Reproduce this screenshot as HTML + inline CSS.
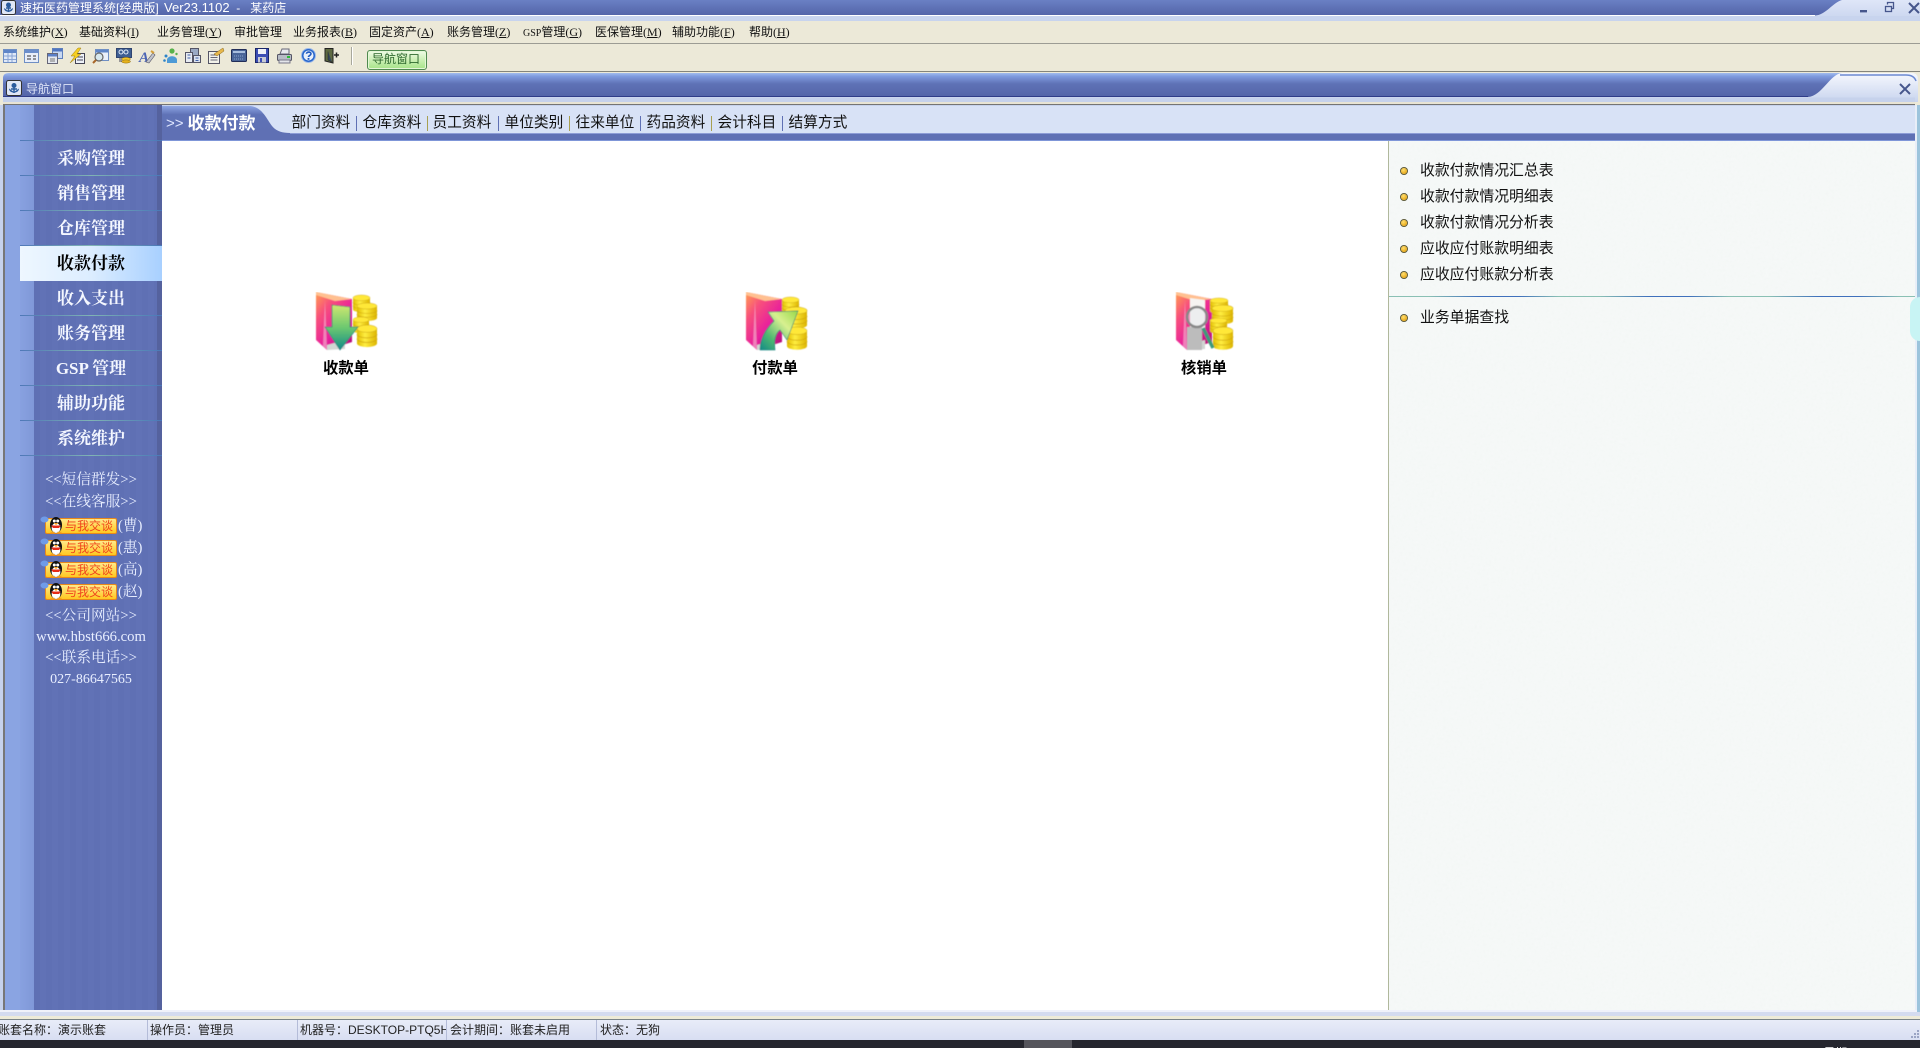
<!DOCTYPE html>
<html lang="zh-CN"><head><meta charset="utf-8"><title>速拓医药管理系统</title>
<style>
html,body{margin:0;padding:0;width:1920px;height:1048px;overflow:hidden;background:#ece9d8}
body{position:relative;font-family:"Liberation Sans","Noto Sans CJK SC",sans-serif;font-size:12px;color:#000}
div,span,svg{position:absolute;display:block}
.t{white-space:nowrap;line-height:18px}
.m{top:23px;font-size:12px;color:#111;font-family:"Liberation Serif","WenQuanYi Zen Hei","Noto Sans CJK SC",sans-serif}
.s{height:1px;left:20px;width:142px;background:linear-gradient(90deg,#4f78b8,#80b4b4 50%,#4a78b8)}
.n{left:20px;width:142px;text-align:center;font:bold 17px/20px "Liberation Serif","Noto Serif CJK SC",serif;color:#f4f7ff;white-space:nowrap}
.l{left:34px;width:114px;text-align:center;font:14.67px/18px "Liberation Serif","Noto Serif CJK SC",serif;color:#e8eeff;white-space:nowrap}
.tb{top:114px;font:14.70px/18px "Liberation Sans","WenQuanYi Zen Hei","Noto Sans CJK SC",sans-serif;color:#111;white-space:nowrap}
.bar{top:116px;width:1px;height:15px;background:#5f70b4}
.lab{top:359px;width:80px;text-align:center;font:bold 15.300px/20px "Liberation Sans","Noto Sans CJK SC",sans-serif;color:#000}
.r{left:1420px;font:14.85px/18px "Liberation Sans","WenQuanYi Zen Hei","Noto Sans CJK SC",sans-serif;color:#111;white-space:nowrap}
.d{left:1401px;width:6px;height:6px;border-radius:50%;background:radial-gradient(circle at 40% 35%,#ffe070,#e8a818 70%);box-shadow:0 0 0 1px #5d5a38}
.st{top:1021px;font-size:12px;line-height:18px;color:#222;white-space:nowrap}
.sd{top:1020px;width:1px;height:20px;background:#b4bcd8}
.q{font:14.67px/18px 'Liberation Serif','Noto Serif CJK SC',serif;color:#e8eeff}
.qt{left:25px;font-size:12px;line-height:16px;color:#f0441c}
</style></head><body>

<!-- main title bar -->
<div style="left:0;top:0;width:1920px;height:21px;background:linear-gradient(#dfe6f8,#c8d4ee)"></div>
<div style="left:0;top:16px;width:1920px;height:5px;background:#c8d4ee"></div>
<svg style="left:0;top:0" width="1920" height="17"><defs><linearGradient id="tg" x1="0" y1="0" x2="0" y2="1"><stop offset="0" stop-color="#6a80c4"/><stop offset="1" stop-color="#5364a8"/></linearGradient></defs>
<path d="M0 0H1842C1832 3 1826 15 1815 15.500H0Z" fill="url(#tg)"/><path d="M0 15.500H1815" stroke="#fff" stroke-width="1"/></svg>
<svg style="left:1850px;top:0" width="70" height="16" fill="none" stroke="#46568c">
<rect x="10" y="10" width="7" height="2.400" fill="#46568c" stroke="none"/>
<rect x="35.500" y="6.500" width="6" height="5" stroke-width="1.300"/><path d="M37.500 4.500V2.500H43.500V8.500H41.500" stroke-width="1.300"/>
<path d="M59 3L69 13M69 3L59 13" stroke-width="2"/></svg>
<svg style="left:1px;top:0" width="16" height="15"><rect x=".5" y=".5" width="14" height="14" rx="2" fill="#dfe6f5" stroke="#333"/><path d="M3 8C3 13 12 13 12 8L7.500 11Z" fill="#2a5b9c"/><circle cx="7.500" cy="5" r="2.500" fill="#2a5b9c"/><path d="M7.500 5V12M5 8H10" stroke="#2a5b9c" stroke-width="1.500"/></svg>
<div class="t" style="left:20px;top:-1px;color:#fff;font-size:12px">速拓医药管理系统[经典版] <span style="position:static;display:inline;font-size:13px;margin-left:2px">Ver23.1102</span> &nbsp;- &nbsp;&nbsp;某药店</div>

<!-- menu -->
<div style="left:0;top:21px;width:1920px;height:22px;background:#ece9d8"></div>
<div style="left:0;top:43px;width:1920px;height:1px;background:#9c9c94"></div>
<div class="t m" style="left:3px">系统维护(<u>X</u>)</div>
<div class="t m" style="left:79px">基础资料(<u>I</u>)</div>
<div class="t m" style="left:157px">业务管理(<u>Y</u>)</div>
<div class="t m" style="left:234px">审批管理</div>
<div class="t m" style="left:293px">业务报表(<u>B</u>)</div>
<div class="t m" style="left:369px">固定资产(<u>A</u>)</div>
<div class="t m" style="left:447px">账务管理(<u>Z</u>)</div>
<div class="t m" style="left:523px"><span style="position:static;display:inline;font-size:10px">GSP</span>管理(<u>G</u>)</div>
<div class="t m" style="left:595px">医保管理(<u>M</u>)</div>
<div class="t m" style="left:672px">辅助功能(<u>F</u>)</div>
<div class="t m" style="left:749px">帮助(<u>H</u>)</div>

<!-- toolbar -->
<div style="left:0;top:44px;width:1920px;height:27px;background:#ece9d8"></div>
<div style="left:0;top:71px;width:1920px;height:1px;background:#85857c"></div>
<svg style="left:0;top:44px" width="350" height="26" stroke-width="1">
<g transform="translate(3,5)"><rect x=".5" y=".5" width="13" height="13" fill="#dfe9f8" stroke="#6f8fc4"/><rect x="1" y="1" width="12" height="3" fill="#5f86c8"/><path d="M1 7H13M1 10.500H13M5 4V13M9 4V13" stroke="#8aa5d4"/></g>
<g transform="translate(24,5)"><rect x=".5" y=".5" width="14" height="13" fill="#e8eef9" stroke="#6f8fc4"/><rect x="1" y="1" width="13" height="3" fill="#6b8ecb"/><path d="M3 7H7M3 10H7M9 7H12M9 10H12" stroke="#333"/></g>
<g transform="translate(47,4)"><rect x="5.500" y=".5" width="10" height="10" fill="#c7d8f2" stroke="#5e7fbd"/><rect x="6" y="1" width="9" height="2.500" fill="#4f75c1"/><rect x=".5" y="5.500" width="10" height="10" fill="#e4e8ef" stroke="#667"/><rect x="1" y="6" width="9" height="2.500" fill="#5b7fc7"/><path d="M3 11H8M3 13H8" stroke="#777"/></g>
<g transform="translate(69,4)"><rect x="6.500" y="5.500" width="9" height="10" fill="#eef2f9" stroke="#445"/><path d="M8 9H14M8 12H14" stroke="#445"/><path d="M9 0L2 8H6L1 15L12 6H8L12 0Z" fill="#f6cf22" stroke="#9a7a10" stroke-width=".5"/></g>
<g transform="translate(93,4)"><rect x="2.500" y="1.500" width="13" height="11" fill="#eaf0fa" stroke="#6f8fc4"/><rect x="3" y="2" width="12" height="2.500" fill="#5f86c8"/><circle cx="6" cy="9" r="4" fill="#d7e8ee" stroke="#666" stroke-width="1.200"/><path d="M3 12L0 15" stroke="#a8672a" stroke-width="2"/></g>
<g transform="translate(116,4)"><rect x=".5" y=".5" width="15" height="9" fill="#3e5e92" stroke="#2f4470"/><circle cx="5" cy="4" r="2" fill="none" stroke="#dfe8f5"/><circle cx="10" cy="4" r="2" fill="none" stroke="#dfe8f5"/><ellipse cx="10" cy="11" rx="4.500" ry="1.600" fill="#f2c52a" stroke="#8d6c10" stroke-width=".5"/><ellipse cx="10" cy="13.500" rx="4.500" ry="1.600" fill="#e6b21c" stroke="#8d6c10" stroke-width=".5"/><path d="M3 11H6M3 13H6" stroke="#445"/></g>
<g transform="translate(139,4)"><text x="0" y="14" font-family="Liberation Serif" font-size="15" font-weight="bold" font-style="italic" fill="#4a63b4">A</text><path d="M7 14L14 5L16 7L10 15Z" fill="#c0c4cc" stroke="#556" stroke-width=".6"/><path d="M12 3L15 5" stroke="#d4a03a" stroke-width="2"/></g>
<g transform="translate(163,4)"><circle cx="9" cy="3" r="2.600" fill="#57b24b"/><path d="M4 12C4 7 14 7 14 12L14 15H4Z" fill="#4d9ad6"/><circle cx="3" cy="8" r="1.500" fill="#2d84c8"/><circle cx="1.500" cy="12.500" r="1.300" fill="#2d84c8"/><circle cx="13.500" cy="6" r="1.200" fill="#54b04c"/></g>
<g transform="translate(185,4)"><rect x="5.500" y=".5" width="8" height="7" fill="#9aa9c4" stroke="#556"/><rect x=".5" y="4.500" width="7" height="10" fill="#e7ebf2" stroke="#556"/><rect x="8.500" y="7.500" width="7" height="7" fill="#dce3f0" stroke="#556"/><path d="M2.500 7H5.500M2.500 10H5.500M10.500 10H13.500M10.500 12.500H13.500" stroke="#4060a8"/></g>
<g transform="translate(208,4)"><rect x=".5" y="3.500" width="11" height="12" fill="#f2f2ea" stroke="#556"/><path d="M2.500 7H9.500M2.500 9.500H9.500M2.500 12H9.500" stroke="#667"/><path d="M6 6L15 0L16 3L9 8Z" fill="#e7b74b" stroke="#8a6a20" stroke-width=".5"/></g>
<g transform="translate(231,5)"><rect x=".5" y=".5" width="15" height="12" rx="1" fill="#4a6598" stroke="#222e58"/><rect x="2" y="2" width="12" height="2" fill="#a9bedd"/><path d="M3 7H13M3 10H13" stroke="#8aa2cc" stroke-dasharray="1 1"/></g>
<g transform="translate(255,4)"><rect x=".5" y=".5" width="13" height="14" fill="#3c4eb4" stroke="#1a2668"/><rect x="3" y="1" width="8" height="5" fill="#f0f2f8"/><rect x="3" y="9" width="8" height="5.500" fill="#c8cbd4"/><rect x="5" y="10" width="2" height="4" fill="#3c4eb4"/></g>
<g transform="translate(277,4)"><path d="M5 1H12L12 6H3Z" fill="#e8eaee" stroke="#667"/><rect x=".5" y="6.500" width="14" height="6" rx="1" fill="#b7bcc6" stroke="#556"/><rect x="2" y="12" width="11" height="3" fill="#e4e6ea" stroke="#778"/><rect x="10" y="8" width="3" height="2" fill="#2cbb38"/></g>
<g transform="translate(301,4)"><circle cx="7.500" cy="7.500" r="7" fill="#2867cc" stroke="#9cb9ea"/><circle cx="7.500" cy="7.500" r="5" fill="#e8effa"/><path d="M5.500 5.800C5.500 3.500 10 3.500 10 5.800C10 7.500 7.500 7.300 7.500 9" fill="none" stroke="#1f59c0" stroke-width="1.600"/><rect x="6.600" y="10" width="1.800" height="1.800" fill="#1f59c0"/></g>
<g transform="translate(324,4)"><path d="M1 .5H9V15L1 13Z" fill="#5e6a42" stroke="#222"/><path d="M4 3.500V12L8 14" fill="#35485c" stroke="#222" stroke-width=".5"/><path d="M10 7H15M12.500 4.500V9.500" stroke="#222" stroke-width="1.500"/></g>
</svg>
<div style="left:351px;top:47px;width:1px;height:18px;background:#a8a89c;border-right:1px solid #fff"></div>
<div style="left:367px;top:50px;width:58px;height:18px;border:1px solid #4f8a4f;border-radius:3px;background:linear-gradient(#f0fbe8,#cbf0b4 50%,#a6e488);box-shadow:inset 0 0 0 1px #e4f7d6"></div>
<div class="t" style="left:372px;top:50px;font-size:12px;color:#2f6a2f">导航窗口</div>

<!-- nav window title -->
<svg style="left:0;top:72px" width="1920" height="33"><defs>
<linearGradient id="ng" x1="0" y1="0" x2="0" y2="1"><stop offset="0" stop-color="#a2bcee"/><stop offset=".14" stop-color="#7f9ade"/><stop offset=".45" stop-color="#5f72b6"/><stop offset="1" stop-color="#5364a8"/></linearGradient>
<linearGradient id="nl" x1="0" y1="0" x2="0" y2="1"><stop offset="0" stop-color="#f6f8fe"/><stop offset="1" stop-color="#c8d4ee"/></linearGradient></defs>
<rect width="1920" height="33" fill="#ece9d8"/>
<path d="M3 30V6Q3 1 9 1H1912Q1918 1 1918 8V30Z" fill="url(#nl)"/>
<path d="M3 25V6Q3 1 9 1H1842C1830 2 1822 24 1808 25Z" fill="url(#ng)"/>
<path d="M3 24.500H1808" stroke="#2f3c88"/>
<rect x="3" y="25.500" width="1912" height="4.500" fill="#c6d2ec"/>
<rect x="3" y="30" width="1912" height="2" fill="#e8e4d4"/>
<rect x="3" y="32" width="1912" height="1" fill="#747474"/>
<path d="M1840 3H1906Q1914 3 1916 9" fill="none" stroke="#6c8ad2" stroke-width="1.500"/>
<path d="M1900 12L1910 22M1910 12L1900 22" stroke="#46568c" stroke-width="2"/>
</svg>
<svg style="left:6px;top:80px" width="16" height="16"><rect x=".5" y=".5" width="15" height="15" rx="2" fill="#dfe6f5" stroke="#333"/><path d="M3 8.500C3 14 13 14 13 8.500L8 12Z" fill="#2a5b9c"/><circle cx="8" cy="5.500" r="2.500" fill="#2a5b9c"/><path d="M8 5.500V13M5 9H11" stroke="#2a5b9c" stroke-width="1.500"/></svg>
<div class="t" style="left:26px;top:80px;color:#dde4f8;font-size:12px">导航窗口</div>

<!-- body base -->
<div style="left:0;top:105px;width:1920px;height:905px;background:#c6d2ec"></div>
<div style="left:0;top:105px;width:3px;height:907px;background:#c6d2ec"></div>
<div style="left:3px;top:105px;width:2px;height:907px;background:#777"></div>
<div style="left:1915px;top:105px;width:2px;height:907px;background:#e8eef8"></div>
<div style="left:1917px;top:105px;width:3px;height:907px;background:#9cc4dc"></div>

<!-- sidebar -->
<div style="left:5px;top:105px;width:15px;height:905px;background:#8aa4e2"></div>
<div style="left:20px;top:105px;width:14px;height:905px;background:linear-gradient(90deg,#88a1e0,#8098d8)"></div>
<div style="left:34px;top:105px;width:123px;height:905px;background:repeating-linear-gradient(90deg,#5f70b4 0 6px,#6172b6 6px 12px)"></div>
<div style="left:157px;top:105px;width:5px;height:905px;background:#55629e"></div>

<div class="s" style="top:140px"></div><div class="s" style="top:175px"></div><div class="s" style="top:210px"></div><div class="s" style="top:245px"></div><div class="s" style="top:315px"></div><div class="s" style="top:350px"></div><div class="s" style="top:385px"></div><div class="s" style="top:420px"></div><div class="s" style="top:455px"></div>
<div style="left:20px;top:246px;width:142px;height:35px;background:linear-gradient(90deg,#eef7ff,#dcedff 50%,#a8d0ff)"></div>
<div class="n" style="top:149px">采购管理</div>
<div class="n" style="top:184px">销售管理</div>
<div class="n" style="top:219px">仓库管理</div>
<div class="n" style="top:254px;color:#000">收款付款</div>
<div class="n" style="top:289px">收入支出</div>
<div class="n" style="top:324px">账务管理</div>
<div class="n" style="top:359px">GSP 管理</div>
<div class="n" style="top:394px">辅助功能</div>
<div class="n" style="top:429px">系统维护</div>

<div class="l" style="top:471px">&lt;&lt;短信群发&gt;&gt;</div>
<div class="l" style="top:493px">&lt;&lt;在线客服&gt;&gt;</div>
<div class="l" style="top:607px">&lt;&lt;公司网站&gt;&gt;</div>
<div class="l" style="top:628px">www.hbst666.com</div>
<div class="l" style="top:649px">&lt;&lt;联系电话&gt;&gt;</div>
<div class="l" style="top:671px;font-size:14px">027-86647565</div>

<!-- QQ badges -->
<div style="left:40px;top:517px;width:110px;height:88px">
<div style="left:5px;top:1px;width:70px;height:14px;border:1px solid #e8881c;border-radius:2px;background:linear-gradient(#ffe98a,#ffc820)"></div>
<div style="left:5px;top:23px;width:70px;height:14px;border:1px solid #e8881c;border-radius:2px;background:linear-gradient(#ffe98a,#ffc820)"></div>
<div style="left:5px;top:45px;width:70px;height:14px;border:1px solid #e8881c;border-radius:2px;background:linear-gradient(#ffe98a,#ffc820)"></div>
<div style="left:5px;top:67px;width:70px;height:14px;border:1px solid #e8881c;border-radius:2px;background:linear-gradient(#ffe98a,#ffc820)"></div>
<svg style="left:0;top:-1px" width="26" height="88">
<defs><g id="qq"><ellipse cx="4.500" cy="3.500" rx="4" ry="3" fill="#6f9be8"/><ellipse cx="16" cy="9" rx="6" ry="8" fill="#111"/><ellipse cx="16" cy="12" rx="4.400" ry="5" fill="#fff"/><circle cx="14.300" cy="5" r="1.500" fill="#fff"/><circle cx="17.700" cy="5" r="1.500" fill="#fff"/><path d="M13.500 7H18.500L16 9Z" fill="#f6a21c"/><path d="M11 9.500H21L19 12H13Z" fill="#e62c18"/><path d="M10.500 16.500H14.500M17.500 16.500H21.500" stroke="#f6a21c" stroke-width="1.500"/></g></defs>
<use href="#qq"/><use href="#qq" y="22"/><use href="#qq" y="44"/><use href="#qq" y="66"/></svg>
<div class="t qt" style="top:1px">与我交谈</div>
<div class="t qt" style="top:23px">与我交谈</div>
<div class="t qt" style="top:45px">与我交谈</div>
<div class="t qt" style="top:67px">与我交谈</div>
<div class="t q" style="left:78px;top:0">(曹)</div>
<div class="t q" style="left:78px;top:22px">(惠)</div>
<div class="t q" style="left:78px;top:44px">(高)</div>
<div class="t q" style="left:78px;top:66px">(赵)</div>
</div>

<!-- main -->
<div style="left:162px;top:141px;width:1226px;height:869px;background:#fff"></div>
<div style="left:1388px;top:141px;width:1px;height:869px;background:#b0b89c"></div>
<div style="left:1389px;top:141px;width:526px;height:869px;background:#f6f9f8"></div>
<svg style="left:1389px;top:141px;opacity:.03" width="526" height="869"><filter id="nz"><feTurbulence type="fractalNoise" baseFrequency=".35" numOctaves="2"/><feColorMatrix type="saturate" values="0"/></filter><rect width="526" height="869" filter="url(#nz)"/></svg>
<div style="left:0;top:1010px;width:1917px;height:2px;background:#f0f2fa"></div>

<!-- tab strip -->
<svg style="left:162px;top:105px" width="1753" height="36"><defs>
<linearGradient id="tb" x1="0" y1="0" x2="0" y2="1"><stop offset="0" stop-color="#8ea6e4"/><stop offset=".3" stop-color="#5f72b6"/><stop offset="1" stop-color="#5f70b4"/></linearGradient></defs>
<rect y="1" width="1753" height="35" fill="#5f70b4"/>
<rect y="1" width="110" height="29" fill="url(#tb)"/>
<path d="M88 1C100 2 104 13 110 21C114 26 120 28 128 28H1753V1Z" fill="#d8e2f6"/>
<path d="M128 28.500H1753" stroke="#8d9cd6"/>
<rect y="35" width="1753" height="1" fill="#7f96d8"/></svg>
<div class="t" style="left:166px;top:115px;color:#dfe6ff;font-size:15px">&gt;&gt;</div>
<div class="t" style="left:187.500px;top:114px;color:#fff;font:bold 17px/20px 'Liberation Sans','Noto Sans CJK SC',sans-serif">收款付款</div>
<div class="tb" style="left:291.500px">部门资料</div><div class="bar" style="left:356px"></div>
<div class="tb" style="left:362.500px">仓库资料</div><div class="bar" style="left:427px;background:#a8a050"></div>
<div class="tb" style="left:432.500px">员工资料</div><div class="bar" style="left:498px"></div>
<div class="tb" style="left:504.500px">单位类别</div><div class="bar" style="left:569px;background:#a8a050"></div>
<div class="tb" style="left:575.500px">往来单位</div><div class="bar" style="left:640px"></div>
<div class="tb" style="left:646.500px">药品资料</div><div class="bar" style="left:711px;background:#a8a050"></div>
<div class="tb" style="left:717.500px">会计科目</div><div class="bar" style="left:782px"></div>
<div class="tb" style="left:788.500px">结算方式</div>

<!-- big icons -->
<svg width="0" height="0" style="left:0;top:0"><defs>
<linearGradient id="fo" x1="0" y1="0" x2=".8" y2="1"><stop offset="0" stop-color="#ffa050"/><stop offset=".3" stop-color="#f8507c"/><stop offset=".65" stop-color="#e8209c"/><stop offset="1" stop-color="#b8107c"/></linearGradient>
<linearGradient id="co" x1="0" y1="0" x2="1" y2="0"><stop offset="0" stop-color="#e0bc00"/><stop offset=".4" stop-color="#ffee40"/><stop offset="1" stop-color="#dcb400"/></linearGradient>
<linearGradient id="ar" x1="0" y1="0" x2="0" y2="1"><stop offset="0" stop-color="#cfe870"/><stop offset=".5" stop-color="#6cc870"/><stop offset="1" stop-color="#108a88"/></linearGradient>
<linearGradient id="ar2" x1="1" y1="0" x2="0" y2="1"><stop offset="0" stop-color="#98d848"/><stop offset=".35" stop-color="#d8f090"/><stop offset=".7" stop-color="#50b870"/><stop offset="1" stop-color="#108a88"/></linearGradient>
<filter id="sf" x="-5%" y="-5%" width="110%" height="110%"><feGaussianBlur stdDeviation=".4"/></filter>
<g id="stack"><path d="M0 4V20A10 4 0 0 0 20 20V4Z" fill="url(#co)"/><ellipse cx="10" cy="4" rx="10" ry="4" fill="#ffe838" stroke="#c8a010" stroke-width=".5"/><path d="M0 10A10 4 0 0 0 20 10M0 15A10 4 0 0 0 20 15" fill="none" stroke="#d0a810" stroke-width=".8"/></g>
<g id="fold"><path d="M1 0L37 7V50L12 58L1 48Z" fill="url(#fo)"/><path d="M1 0L37 7L20 9L1 3Z" fill="#ffc090"/><path d="M10 8L12 58L8 54Z" fill="#f4a8c8" opacity=".7"/><path d="M12 53L30 48V57L12 58Z" fill="#d0d6d2"/></g>
</defs></svg>

<svg style="left:315px;top:292px" width="64" height="60"><g filter="url(#sf)">
<use href="#fold"/>
<use href="#stack" transform="translate(38,3) scale(.85,.72)"/>
<use href="#stack" transform="translate(42,11) scale(1,.75)"/>
<use href="#stack" transform="translate(38,25) scale(.8,.68)"/>
<use href="#stack" transform="translate(42,33) scale(1,.92)"/>
<path d="M17 13L35 15V35H43L25 58L10 35H17Z" fill="url(#ar)" stroke="#0e7a7c" stroke-width=".6"/></g></svg>
<div class="lab" style="left:306px">收款单</div>

<svg style="left:745px;top:292px" width="64" height="60"><g filter="url(#sf)">
<use href="#fold"/>
<use href="#stack" transform="translate(37,5) scale(.85,.72)"/>
<use href="#stack" transform="translate(40,15) scale(1.1,.9)"/>
<use href="#stack" transform="translate(42,35) scale(1,.95)"/>
<path d="M23 20L53 19L42 48L35 38C30 42 29 50 30 58L15 58C15 46 22 36 29 29Z" fill="url(#ar2)" stroke="#0e7a7c" stroke-width=".6"/></g></svg>
<div class="lab" style="left:735px">付款单</div>

<svg style="left:1175px;top:292px" width="64" height="60"><g filter="url(#sf)">
<use href="#fold"/><path d="M15 6L30 8V38L15 36Z" fill="#f6f4f2"/>
<use href="#stack" transform="translate(35,6) scale(.9,.65)"/>
<use href="#stack" transform="translate(37,13) scale(1.05,.8)"/>
<use href="#stack" transform="translate(35,26) scale(.85,.65)"/>
<use href="#stack" transform="translate(38,35) scale(1,.95)"/>
<rect x="12" y="35" width="15" height="23" fill="#bcbcbc"/><circle cx="22" cy="25" r="10" fill="#e4e8ec" fill-opacity=".5" stroke="#888" stroke-width="2.500"/><path d="M28 36L38 56" stroke="#3a9a7c" stroke-width="3.500"/></g></svg>
<div class="lab" style="left:1164px">核销单</div>

<!-- right list -->
<div class="d" style="top:168px"></div><div class="r" style="top:162px">收款付款情况汇总表</div>
<div class="d" style="top:194px"></div><div class="r" style="top:188px">收款付款情况明细表</div>
<div class="d" style="top:220px"></div><div class="r" style="top:214px">收款付款情况分析表</div>
<div class="d" style="top:246px"></div><div class="r" style="top:240px">应收应付账款明细表</div>
<div class="d" style="top:272px"></div><div class="r" style="top:265.500px">应收应付账款分析表</div>
<div style="left:1389px;top:296px;width:526px;height:1px;background:repeating-linear-gradient(90deg,#8ac0b4 0,#8ac0b4 40px,#3f70bc 90px,#3f70bc 130px,#8ac0b4 170px)"></div>
<div class="d" style="top:315px"></div><div class="r" style="top:308.500px">业务单据查找</div>
<div style="left:1910px;top:297px;width:10px;height:44px;border-radius:22px 0 0 22px;background:#c8f4f4"></div>

<!-- status -->
<div style="left:0;top:1012px;width:1920px;height:4px;background:#d4dbef"></div>
<div style="left:0;top:1016px;width:1920px;height:3px;background:#eeebd8"></div>
<div style="left:0;top:1019px;width:1920px;height:1px;background:#7a8488"></div>
<div style="left:0;top:1020px;width:1920px;height:20px;background:linear-gradient(#e8ecf8,#d8def2)"></div>
<div class="st" style="left:-2px">账套名称：演示账套</div>
<div class="sd" style="left:147px"></div>
<div class="st" style="left:150px">操作员：管理员</div>
<div class="sd" style="left:297px"></div>
<div class="st" style="left:300px;width:146px;overflow:hidden">机器号：DESKTOP-PTQ5H</div>
<div class="sd" style="left:446px"></div>
<div class="st" style="left:450px">会计期间：账套未启用</div>
<div class="sd" style="left:596px"></div>
<div class="st" style="left:600px">状态：无狗</div>
<svg style="left:1910px;top:1029px" width="10" height="11" fill="#9aa4c4"><rect x="7" y="1" width="2" height="2"/><rect x="4" y="4" width="2" height="2"/><rect x="7" y="4" width="2" height="2"/><rect x="1" y="7" width="2" height="2"/><rect x="4" y="7" width="2" height="2"/><rect x="7" y="7" width="2" height="2"/></svg>

<!-- taskbar -->
<div style="left:0;top:1040px;width:1920px;height:8px;background:#25262e;overflow:hidden">
<div style="left:1024px;top:0;width:48px;height:8px;background:#55555c"></div>
<div class="t" style="left:1790px;top:4px;color:#fff;font-size:12px">14:23 星期三</div>
</div>
</body></html>
